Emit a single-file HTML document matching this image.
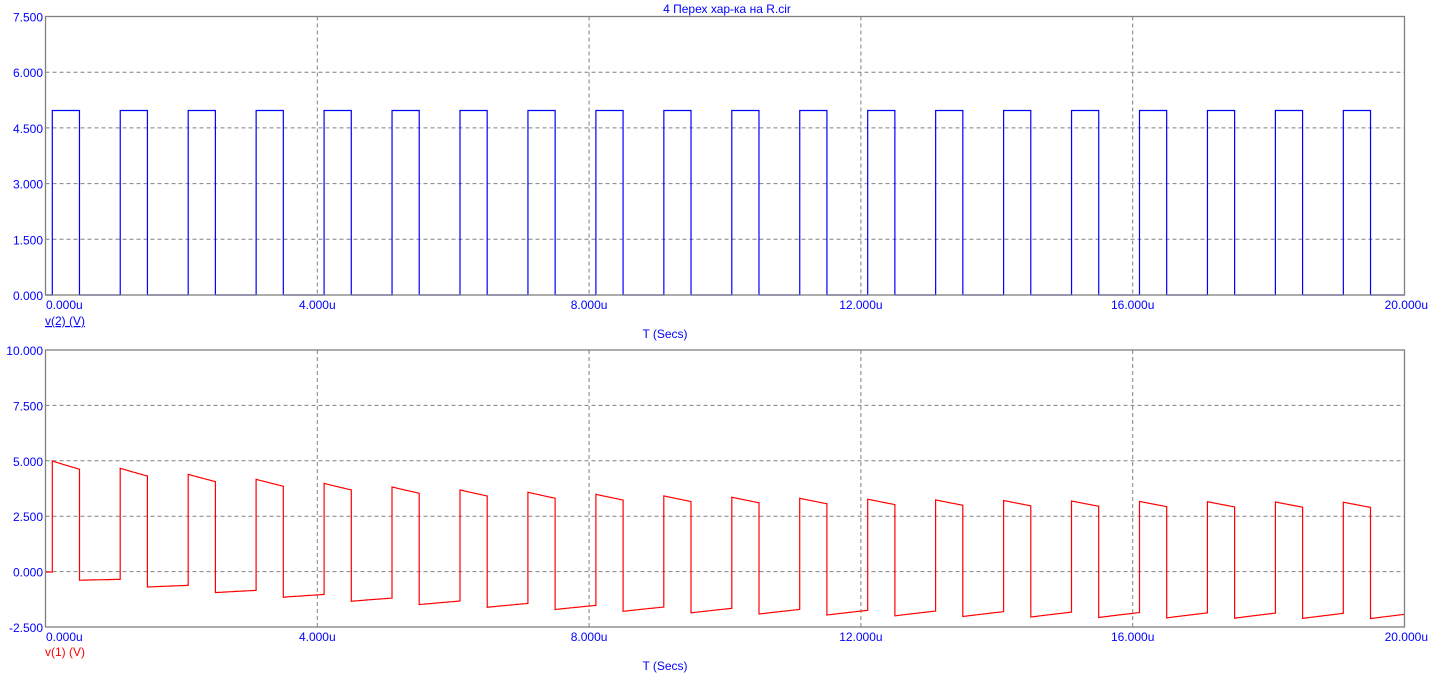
<!DOCTYPE html>
<html><head><meta charset="utf-8"><style>
html,body{margin:0;padding:0;background:#fff;width:1436px;height:680px;overflow:hidden}
svg{display:block}
text{font-family:"Liberation Sans","DejaVu Sans",sans-serif;font-size:12px}
</style></head><body>
<svg id="s" width="1436" height="680" xmlns="http://www.w3.org/2000/svg">
<text x="727" y="13" fill="#0000ff" text-anchor="middle" font-size="11">4 Перех хар-ка на R.cir</text>
<g id="g1"></g>
<text x="45" y="325" fill="#0000ff" text-decoration="underline">v(2) (V)</text>
<text x="665" y="338" fill="#0000ff" text-anchor="middle">T (Secs)</text>
<text x="45" y="656" fill="#ff0000">v(1) (V)</text>
<text x="665" y="670" fill="#0000ff" text-anchor="middle">T (Secs)</text>
</svg>
<script>
var NS="http://www.w3.org/2000/svg",g=document.getElementById('g1');
function el(n,a,t){var e=document.createElementNS(NS,n);for(var k in a)e.setAttribute(k,a[k]);if(t!=null)e.textContent=t;g.appendChild(e);return e;}
var X0=45.5,X1=1404.5,W=X1-X0;
function X(t){return X0+t/20*W;}
function plot(top,bot,labels,col,path){
  var h=(bot-top)/5;
  for(var i=1;i<5;i++){el('line',{x1:X0,x2:X1,y1:top+i*h,y2:top+i*h,stroke:'#808080','stroke-dasharray':'4,3'});
    el('line',{y1:top,y2:bot,x1:X0+i*W/5,x2:X0+i*W/5,stroke:'#808080','stroke-dasharray':'4,3'});}
  el('path',{d:path,fill:'none',stroke:col,'stroke-width':1.2});
  el('rect',{x:X0,y:top,width:W,height:bot-top,fill:'none',stroke:'#808080','stroke-width':1.3});
  for(var i=0;i<=5;i++){el('text',{x:43,y:bot-i*h+5,fill:'#0000ff','text-anchor':'end'},labels[i]);}
  var xl=['0.000u','4.000u','8.000u','12.000u','16.000u','20.000u'];
  for(var i=0;i<=5;i++){var x=X0+i*W/5;el('text',{x:i==0?46:(i==5?1428:x),y:bot+14,fill:'#0000ff','text-anchor':i==0?'start':(i==5?'end':'middle')},xl[i]);}
}
// square wave
var p='M'+X0+' 295';
for(var n=0;n<20;n++){var a=X(n+0.1),b=X(n+0.5);p+=' L'+a+' 295 L'+a+' 110.5 L'+b+' 110.5 L'+b+' 295';}
p+=' L'+X1+' 295';
// RC
function Y(v){return 572-v*22.2;}
var tau=5.2,v=0,q='M'+X0+' '+Y(0),t=0,dt=0.02;
for(var n=0;n<20;n++){
  // low from t to n+0.1
  var ts=n+0.1;
  while(t<ts){t=Math.min(ts,t+dt);v*=Math.exp(-dt/tau);q+=' L'+X(t).toFixed(1)+' '+Y(v).toFixed(1);}
  v+=5;q+=' L'+X(t).toFixed(1)+' '+Y(v).toFixed(1);
  ts=n+0.5;
  while(t<ts){t=Math.min(ts,t+dt);v*=Math.exp(-dt/tau);q+=' L'+X(t).toFixed(1)+' '+Y(v).toFixed(1);}
  v-=5;q+=' L'+X(t).toFixed(1)+' '+Y(v).toFixed(1);
}
while(t<20){t=Math.min(20,t+dt);v*=Math.exp(-dt/tau);q+=' L'+X(t).toFixed(1)+' '+Y(v).toFixed(1);}
plot(16.5,295,['0.000','1.500','3.000','4.500','6.000','7.500'],'#0000ff',p);
plot(350,627,['-2.500','0.000','2.500','5.000','7.500','10.000'],'#ff0000',q);
</script>
</body></html>
